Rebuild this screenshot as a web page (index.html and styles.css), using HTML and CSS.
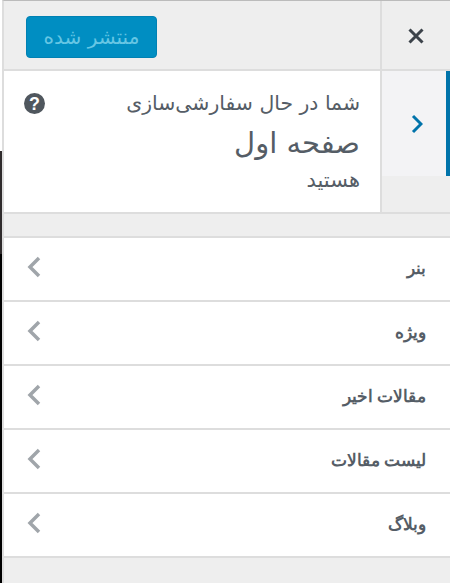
FILE: index.html
```html
<!DOCTYPE html>
<html lang="fa" dir="rtl">

<head>
    <meta charset="UTF-8">
    <meta name="viewport" content="width=device-width, initial-scale=1.0">
    <title>سفارشی‌سازی</title>
    <link rel="stylesheet" href="styles.css">
</head>

<body>
    <div class="edge"></div>
    <div class="panel">
        <div class="header">
            <button class="close" aria-label="بستن">
                <svg width="16" height="16" viewBox="0 0 16 16">
                    <path d="M1.5 1.5L14.5 14.5M14.5 1.5L1.5 14.5" stroke="#3c434a" stroke-width="3" fill="none" />
                </svg>
            </button>
            <div class="actions">
                <button class="publish">منتشر شده</button>
            </div>
        </div>

        <div class="info">
            <div class="back">
                <svg width="12" height="20" viewBox="0 0 12 20">
                    <path d="M2 2L10 10L2 18" stroke="#0073aa" stroke-width="3" fill="none" />
                </svg>
            </div>
            <div class="info-text">
                <div class="action-row">
                    <span class="action">شما در حال سفارشی‌سازی</span>
                    <svg class="help" width="21" height="21" viewBox="0 0 20 20">
                        <circle cx="10" cy="10" r="10" fill="#50575e" />
                        <text x="10" y="16" text-anchor="middle" class="help-mark">?</text>
                    </svg>
                </div>
                <div class="title">صفحه اول</div>
                <div class="suffix">هستید</div>
            </div>
        </div>

        <div class="spacer"></div>

        <ul class="sections">
            <li class="section"><span>بنر</span><svg width="14" height="22" viewBox="0 0 14 22"><path d="M12 2L3 11L12 20" stroke="#a0a5aa" stroke-width="3.5" fill="none" /></svg></li>
            <li class="section"><span>ویژه</span><svg width="14" height="22" viewBox="0 0 14 22"><path d="M12 2L3 11L12 20" stroke="#a0a5aa" stroke-width="3.5" fill="none" /></svg></li>
            <li class="section"><span>مقالات اخیر</span><svg width="14" height="22" viewBox="0 0 14 22"><path d="M12 2L3 11L12 20" stroke="#a0a5aa" stroke-width="3.5" fill="none" /></svg></li>
            <li class="section"><span>لیست مقالات</span><svg width="14" height="22" viewBox="0 0 14 22"><path d="M12 2L3 11L12 20" stroke="#a0a5aa" stroke-width="3.5" fill="none" /></svg></li>
            <li class="section"><span>وبلاگ</span><svg width="14" height="22" viewBox="0 0 14 22"><path d="M12 2L3 11L12 20" stroke="#a0a5aa" stroke-width="3.5" fill="none" /></svg></li>
        </ul>
    </div>
</body>

</html>
```

FILE: styles.css
```css
* {
    padding: 0;
    margin: 0;
    box-sizing: border-box;
}

body {
    width: 450px;
    height: 583px;
    overflow: hidden;
    background: #fff;
    font-family: "DejaVu Sans", sans-serif;
    color: #555d66;
    display: flex;
    direction: ltr;
}

.edge {
    width: 2px;
    margin-top: 151px;
    background: linear-gradient(#2f2b2c 103px, #000 103px);
}

.panel {
    flex: 1;
    direction: rtl;
    background: #eee;
    border-top: 1px solid #bbb;
    border-left: 2px solid #ddd;
}

.header {
    height: 70px;
    display: flex;
    border-bottom: 2px solid #ddd;
}

.close {
    width: 68px;
    border: none;
    background: #eee;
    display: flex;
    align-items: center;
    justify-content: center;
    padding-top: 2px;
}

.actions {
    flex: 1;
    display: flex;
    align-items: center;
    padding: 4px 0 0 22px;
    border-right: 2px solid #ddd;
    justify-content: flex-end;
}

.publish {
    width: 131px;
    height: 42px;
    background: #008ec2;
    color: #66c6e4;
    border: 1px solid #0081b3;
    border-radius: 4px;
    font-family: "DejaVu Sans", sans-serif;
    font-size: 20px;
}

.info {
    display: flex;
    height: 143px;
    border-bottom: 2px solid #ddd;
}

.back {
    width: 68px;
    height: 105px;
    background: #f3f3f5;
    border-right: 4px solid #0073aa;
    display: flex;
    align-items: center;
    justify-content: center;
    padding-left: 6px;
}

.info-text {
    flex: 1;
    background: #fff;
    padding: 20px 20px 0 0;
    border-right: 2px solid #ddd;
}

.action-row {
    display: flex;
    justify-content: space-between;
    align-items: center;
    height: 24px;
    padding-left: 20px;
}

.action {
    font-size: 20.4px;
    line-height: 24px;
}

.help-mark {
    font: bold 17px "Liberation Sans", sans-serif;
    fill: #fff;
}

.title {
    font-size: 29px;
    line-height: 34px;
    margin-top: 11px;
}

.suffix {
    font-size: 21px;
    line-height: 24px;
    letter-spacing: 2px;
    margin-top: 8px;
}

.spacer {
    height: 22px;
}

.sections {
    list-style: none;
    border-top: 2px solid #ddd;
}

.section {
    height: 64px;
    background: #fff;
    border-bottom: 2px solid #ddd;
    display: flex;
    align-items: center;
    justify-content: space-between;
    padding: 0 24px 4px 23px;
    font-family: "Noto Sans", sans-serif;
    font-size: 16.5px;
    font-weight: bold;
}
```
